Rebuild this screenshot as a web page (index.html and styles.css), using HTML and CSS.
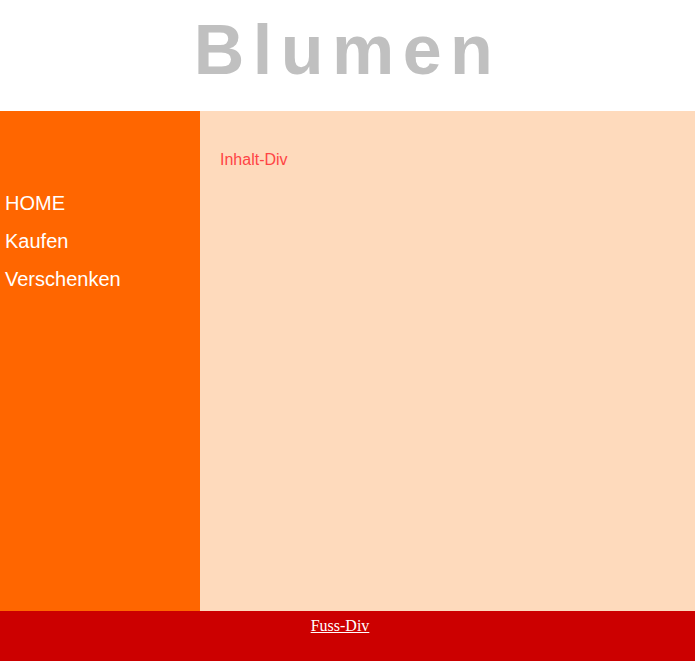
FILE: index.html
```html
<!DOCTYPE html>
<html>
<head>
<meta charset="utf-8">
<link rel="stylesheet" href="styles.css">
</head>
<body>
<div class="kopf"><h1 class="titel">Blumen</h1></div>
<div class="mitte">
  <nav class="navi">
    <div class="navpunkt">HOME</div>
    <div class="navpunkt">Kaufen</div>
    <div class="navpunkt">Verschenken</div>
  </nav>
  <div class="inhalt"><p class="inhalt-text">Inhalt-Div</p></div>
</div>
<div class="fuss"><a class="fuss-link" href="#">Fuss-Div</a></div>
</body>
</html>
```
FILE: styles.css
```css
html, body { margin: 0; padding: 0; }
body { background: #fff; }
.kopf { height: 111px; box-sizing: border-box; padding-top: 15px; text-align: center; }
.titel { margin: 0; font-family: "Liberation Sans", Arial, sans-serif; font-weight: bold; font-size: 70px; letter-spacing: 8.5px; color: #c0c0c0; line-height: 1; }
.mitte { display: flex; height: 500px; }
.navi { width: 200px; background: #ff6600; padding-top: 73px; box-sizing: border-box; }
.navpunkt { font-family: "Liberation Sans", Arial, sans-serif; font-size: 20px; color: #fff; line-height: 38px; padding-left: 5px; }
.inhalt { flex: 1; background: #fedabc; padding: 40px 20px; }
.inhalt-text { margin: 0; font-family: "Liberation Sans", Arial, sans-serif; font-size: 16px; color: #ff4444; }
.fuss { height: 50px; background: #cc0000; text-align: center; padding-right: 15px; padding-top: 6px; box-sizing: border-box; }
.fuss-link { font-family: "Liberation Serif", "Times New Roman", serif; font-size: 16px; color: #fff; }
```
